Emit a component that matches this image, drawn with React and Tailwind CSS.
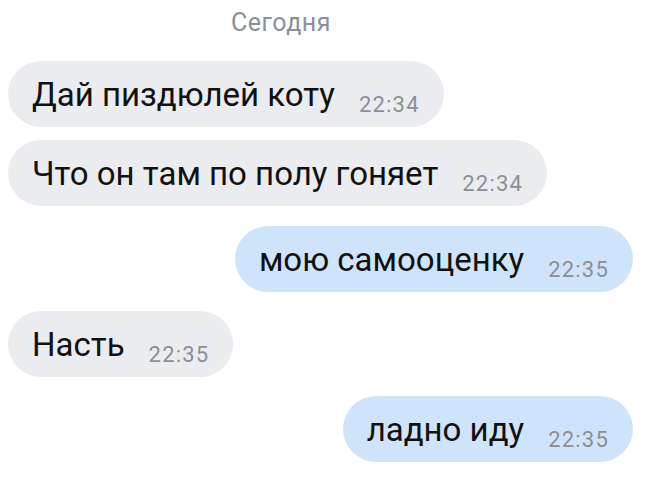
const messages = [
  { text: "Дай пиздюлей коту", time: "22:34", out: false },
  { text: "Что он там по полу гоняет", time: "22:34", out: false },
  { text: "мою самооценку", time: "22:35", out: true },
  { text: "Насть", time: "22:35", out: false },
  { text: "ладно иду", time: "22:35", out: true },
];

function Bubble({ text, time, out }) {
  return (
    <div className={`flex ${out ? "justify-end" : "justify-start"}`}>
      <div
        className={`flex items-center h-[66px] rounded-full px-6 ${
          out ? "bg-[#cfe4fb]" : "bg-[#ebecf0]"
        }`}
      >
        <span className="text-[33px] text-[#111] leading-none">{text}</span>
        <span className="ml-6 mt-[21px] text-[22px] tracking-[1.2px] text-[#8b8f96] leading-none">
          {time}
        </span>
      </div>
    </div>
  );
}

export default function App() {
  return (
    <div className="w-[650px] h-[490px] bg-white overflow-hidden pl-2 pr-[17px] font-['Roboto',sans-serif]">
      <div className="h-[40px] pt-[4px] pr-[79px] text-center text-[25px] tracking-[0.5px] text-[#8a9099]">
        Сегодня
      </div>
      <div className="flex flex-col mt-[21px]">
        <Bubble {...messages[0]} />
        <div className="h-[13px]" />
        <Bubble {...messages[1]} />
        <div className="h-[20px]" />
        <Bubble {...messages[2]} />
        <div className="h-[19px]" />
        <Bubble {...messages[3]} />
        <div className="h-[19px]" />
        <Bubble {...messages[4]} />
      </div>
    </div>
  );
}
